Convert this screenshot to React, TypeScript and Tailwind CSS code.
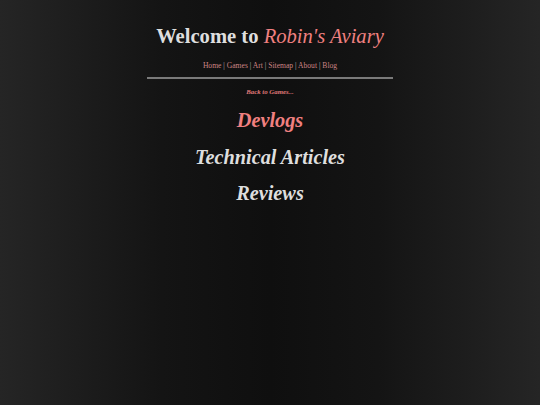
export default function App() {
  const links = ["Home", "Games", "Art", "Sitemap", "About", "Blog"]
  const sections = [
    { label: "Devlogs", active: true },
    { label: "Technical Articles", active: false },
    { label: "Reviews", active: false },
  ]

  return (
    <div className="min-h-[405px] w-full bg-[linear-gradient(to_right,#252525,#141414_30%,#0f0f0f_50%,#141414_70%,#252525)] font-['Liberation_Serif',serif]">
      <div className="mx-auto w-[246px] pt-[24px] text-center">
        <h1 className="whitespace-nowrap text-[20.6px] leading-[25px] font-bold text-[#dedede]">
          Welcome to <span className="font-normal italic text-[#f08080]">Robin's Aviary</span>
        </h1>

        <nav className="mt-[12px] whitespace-nowrap text-[7.6px] leading-[10px] text-[#cc8484]">
          {links.map((l, i) => (
            <span key={l}>
              {i > 0 && <span className="text-[#bbbbbb]"> | </span>}
              <a>{l}</a>
            </span>
          ))}
        </nav>

        <div className="mt-[6px] h-[2px] bg-[#7a7a7a]" />

        <div className="mt-[9px] text-[6.8px] leading-[8px] font-bold italic text-[#e07a7a]">
          Back to Games...
        </div>

        <div className="mt-[12px] flex flex-col items-center gap-[11.5px]">
          {sections.map((s) => (
            <a
              key={s.label}
              className={`text-[20.3px] leading-[25px] font-bold italic ${s.active ? "text-[#f08080]" : "text-[#dedede]"}`}
            >
              {s.label}
            </a>
          ))}
        </div>
      </div>
    </div>
  )
}
